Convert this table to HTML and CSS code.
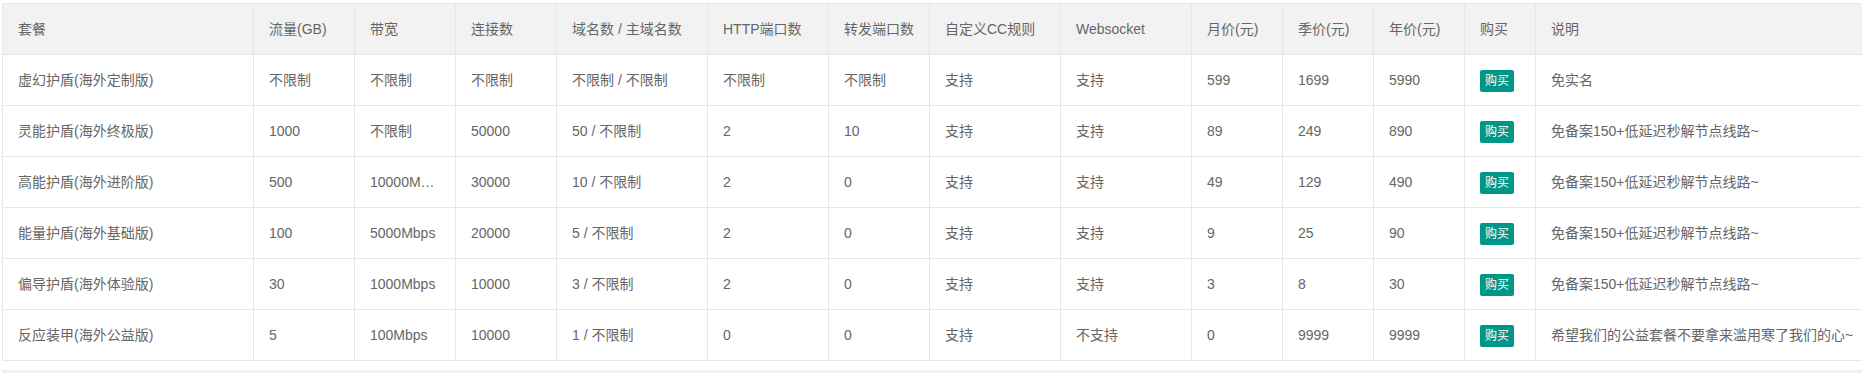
FILE: index.html
```html
<!DOCTYPE html>
<html lang="zh-CN">
<head>
<meta charset="utf-8">
<title>套餐</title>
<link rel="stylesheet" href="styles.css">
</head>
<body>
<div class="view">
  <table class="table">
    <thead>
      <tr>
        <th><div class="cell w250">套餐</div></th>
        <th><div class="cell w100">流量(GB)</div></th>
        <th><div class="cell w100">带宽</div></th>
        <th><div class="cell w100">连接数</div></th>
        <th><div class="cell w150">域名数 / 主域名数</div></th>
        <th><div class="cell w120">HTTP端口数</div></th>
        <th><div class="cell w100">转发端口数</div></th>
        <th><div class="cell w130">自定义CC规则</div></th>
        <th><div class="cell w130">Websocket</div></th>
        <th><div class="cell w90">月价(元)</div></th>
        <th><div class="cell w90">季价(元)</div></th>
        <th><div class="cell w90">年价(元)</div></th>
        <th><div class="cell w70">购买</div></th>
        <th><div class="cell w400">说明</div></th>
      </tr>
    </thead>
    <tbody>
      <tr>
        <td><div class="cell w250">虚幻护盾(海外定制版)</div></td>
        <td><div class="cell w100">不限制</div></td>
        <td><div class="cell w100">不限制</div></td>
        <td><div class="cell w100">不限制</div></td>
        <td><div class="cell w150">不限制 / 不限制</div></td>
        <td><div class="cell w120">不限制</div></td>
        <td><div class="cell w100">不限制</div></td>
        <td><div class="cell w130">支持</div></td>
        <td><div class="cell w130">支持</div></td>
        <td><div class="cell w90">599</div></td>
        <td><div class="cell w90">1699</div></td>
        <td><div class="cell w90">5990</div></td>
        <td><div class="cell w70"><a class="btn">购买</a></div></td>
        <td><div class="cell w400">免实名</div></td>
      </tr>
      <tr>
        <td><div class="cell w250">灵能护盾(海外终极版)</div></td>
        <td><div class="cell w100">1000</div></td>
        <td><div class="cell w100">不限制</div></td>
        <td><div class="cell w100">50000</div></td>
        <td><div class="cell w150">50 / 不限制</div></td>
        <td><div class="cell w120">2</div></td>
        <td><div class="cell w100">10</div></td>
        <td><div class="cell w130">支持</div></td>
        <td><div class="cell w130">支持</div></td>
        <td><div class="cell w90">89</div></td>
        <td><div class="cell w90">249</div></td>
        <td><div class="cell w90">890</div></td>
        <td><div class="cell w70"><a class="btn">购买</a></div></td>
        <td><div class="cell w400">免备案150+低延迟秒解节点线路~</div></td>
      </tr>
      <tr>
        <td><div class="cell w250">高能护盾(海外进阶版)</div></td>
        <td><div class="cell w100">500</div></td>
        <td><div class="cell w100">10000Mbps</div></td>
        <td><div class="cell w100">30000</div></td>
        <td><div class="cell w150">10 / 不限制</div></td>
        <td><div class="cell w120">2</div></td>
        <td><div class="cell w100">0</div></td>
        <td><div class="cell w130">支持</div></td>
        <td><div class="cell w130">支持</div></td>
        <td><div class="cell w90">49</div></td>
        <td><div class="cell w90">129</div></td>
        <td><div class="cell w90">490</div></td>
        <td><div class="cell w70"><a class="btn">购买</a></div></td>
        <td><div class="cell w400">免备案150+低延迟秒解节点线路~</div></td>
      </tr>
      <tr>
        <td><div class="cell w250">能量护盾(海外基础版)</div></td>
        <td><div class="cell w100">100</div></td>
        <td><div class="cell w100">5000Mbps</div></td>
        <td><div class="cell w100">20000</div></td>
        <td><div class="cell w150">5 / 不限制</div></td>
        <td><div class="cell w120">2</div></td>
        <td><div class="cell w100">0</div></td>
        <td><div class="cell w130">支持</div></td>
        <td><div class="cell w130">支持</div></td>
        <td><div class="cell w90">9</div></td>
        <td><div class="cell w90">25</div></td>
        <td><div class="cell w90">90</div></td>
        <td><div class="cell w70"><a class="btn">购买</a></div></td>
        <td><div class="cell w400">免备案150+低延迟秒解节点线路~</div></td>
      </tr>
      <tr>
        <td><div class="cell w250">偏导护盾(海外体验版)</div></td>
        <td><div class="cell w100">30</div></td>
        <td><div class="cell w100">1000Mbps</div></td>
        <td><div class="cell w100">10000</div></td>
        <td><div class="cell w150">3 / 不限制</div></td>
        <td><div class="cell w120">2</div></td>
        <td><div class="cell w100">0</div></td>
        <td><div class="cell w130">支持</div></td>
        <td><div class="cell w130">支持</div></td>
        <td><div class="cell w90">3</div></td>
        <td><div class="cell w90">8</div></td>
        <td><div class="cell w90">30</div></td>
        <td><div class="cell w70"><a class="btn">购买</a></div></td>
        <td><div class="cell w400">免备案150+低延迟秒解节点线路~</div></td>
      </tr>
      <tr>
        <td><div class="cell w250">反应装甲(海外公益版)</div></td>
        <td><div class="cell w100">5</div></td>
        <td><div class="cell w100">100Mbps</div></td>
        <td><div class="cell w100">10000</div></td>
        <td><div class="cell w150">1 / 不限制</div></td>
        <td><div class="cell w120">0</div></td>
        <td><div class="cell w100">0</div></td>
        <td><div class="cell w130">支持</div></td>
        <td><div class="cell w130">不支持</div></td>
        <td><div class="cell w90">0</div></td>
        <td><div class="cell w90">9999</div></td>
        <td><div class="cell w90">9999</div></td>
        <td><div class="cell w70"><a class="btn">购买</a></div></td>
        <td><div class="cell w400">希望我们的公益套餐不要拿来滥用寒了我们的心~</div></td>
      </tr>
    </tbody>
  </table>
  <div class="scrollbar"></div>
</div>
</body>
</html>
```

FILE: styles.css
```css
html, body {
  margin: 0;
  padding: 0;
  background: #fff;
  overflow: hidden;
}

body {
  font-family: "Liberation Sans", "Noto Sans CJK SC", sans-serif;
  font-size: 14px;
  color: #666;
}

.view {
  padding: 3px 0 0 2px;
  width: 2400px;
}

.table {
  border-collapse: collapse;
  border-spacing: 0;
  background: #fff;
}

.table th,
.table td {
  border: 1px solid #e6e6e6;
  padding: 5px 0;
  text-align: left;
  font-weight: 400;
  vertical-align: middle;
}

.table thead tr {
  background: #f2f2f2;
}

.cell {
  box-sizing: border-box;
  height: 40px;
  line-height: 40px;
  padding: 0 15px;
  overflow: hidden;
  white-space: nowrap;
  text-overflow: ellipsis;
}

.w70 { width: 70px; }
.w90 { width: 90px; }
.w100 { width: 100px; }
.w120 { width: 120px; }
.w130 { width: 130px; }
.w150 { width: 150px; }
.w250 { width: 250px; }
.w400 { width: 400px; }

.btn {
  display: inline-block;
  height: 22px;
  line-height: 22px;
  padding: 0 5px;
  font-size: 12px;
  color: #fff;
  background: #009688;
  border-radius: 2px;
  vertical-align: middle;
  cursor: pointer;
}

.scrollbar {
  margin-top: 9px;
  height: 17px;
  background: #f1f1f1;
}
```
